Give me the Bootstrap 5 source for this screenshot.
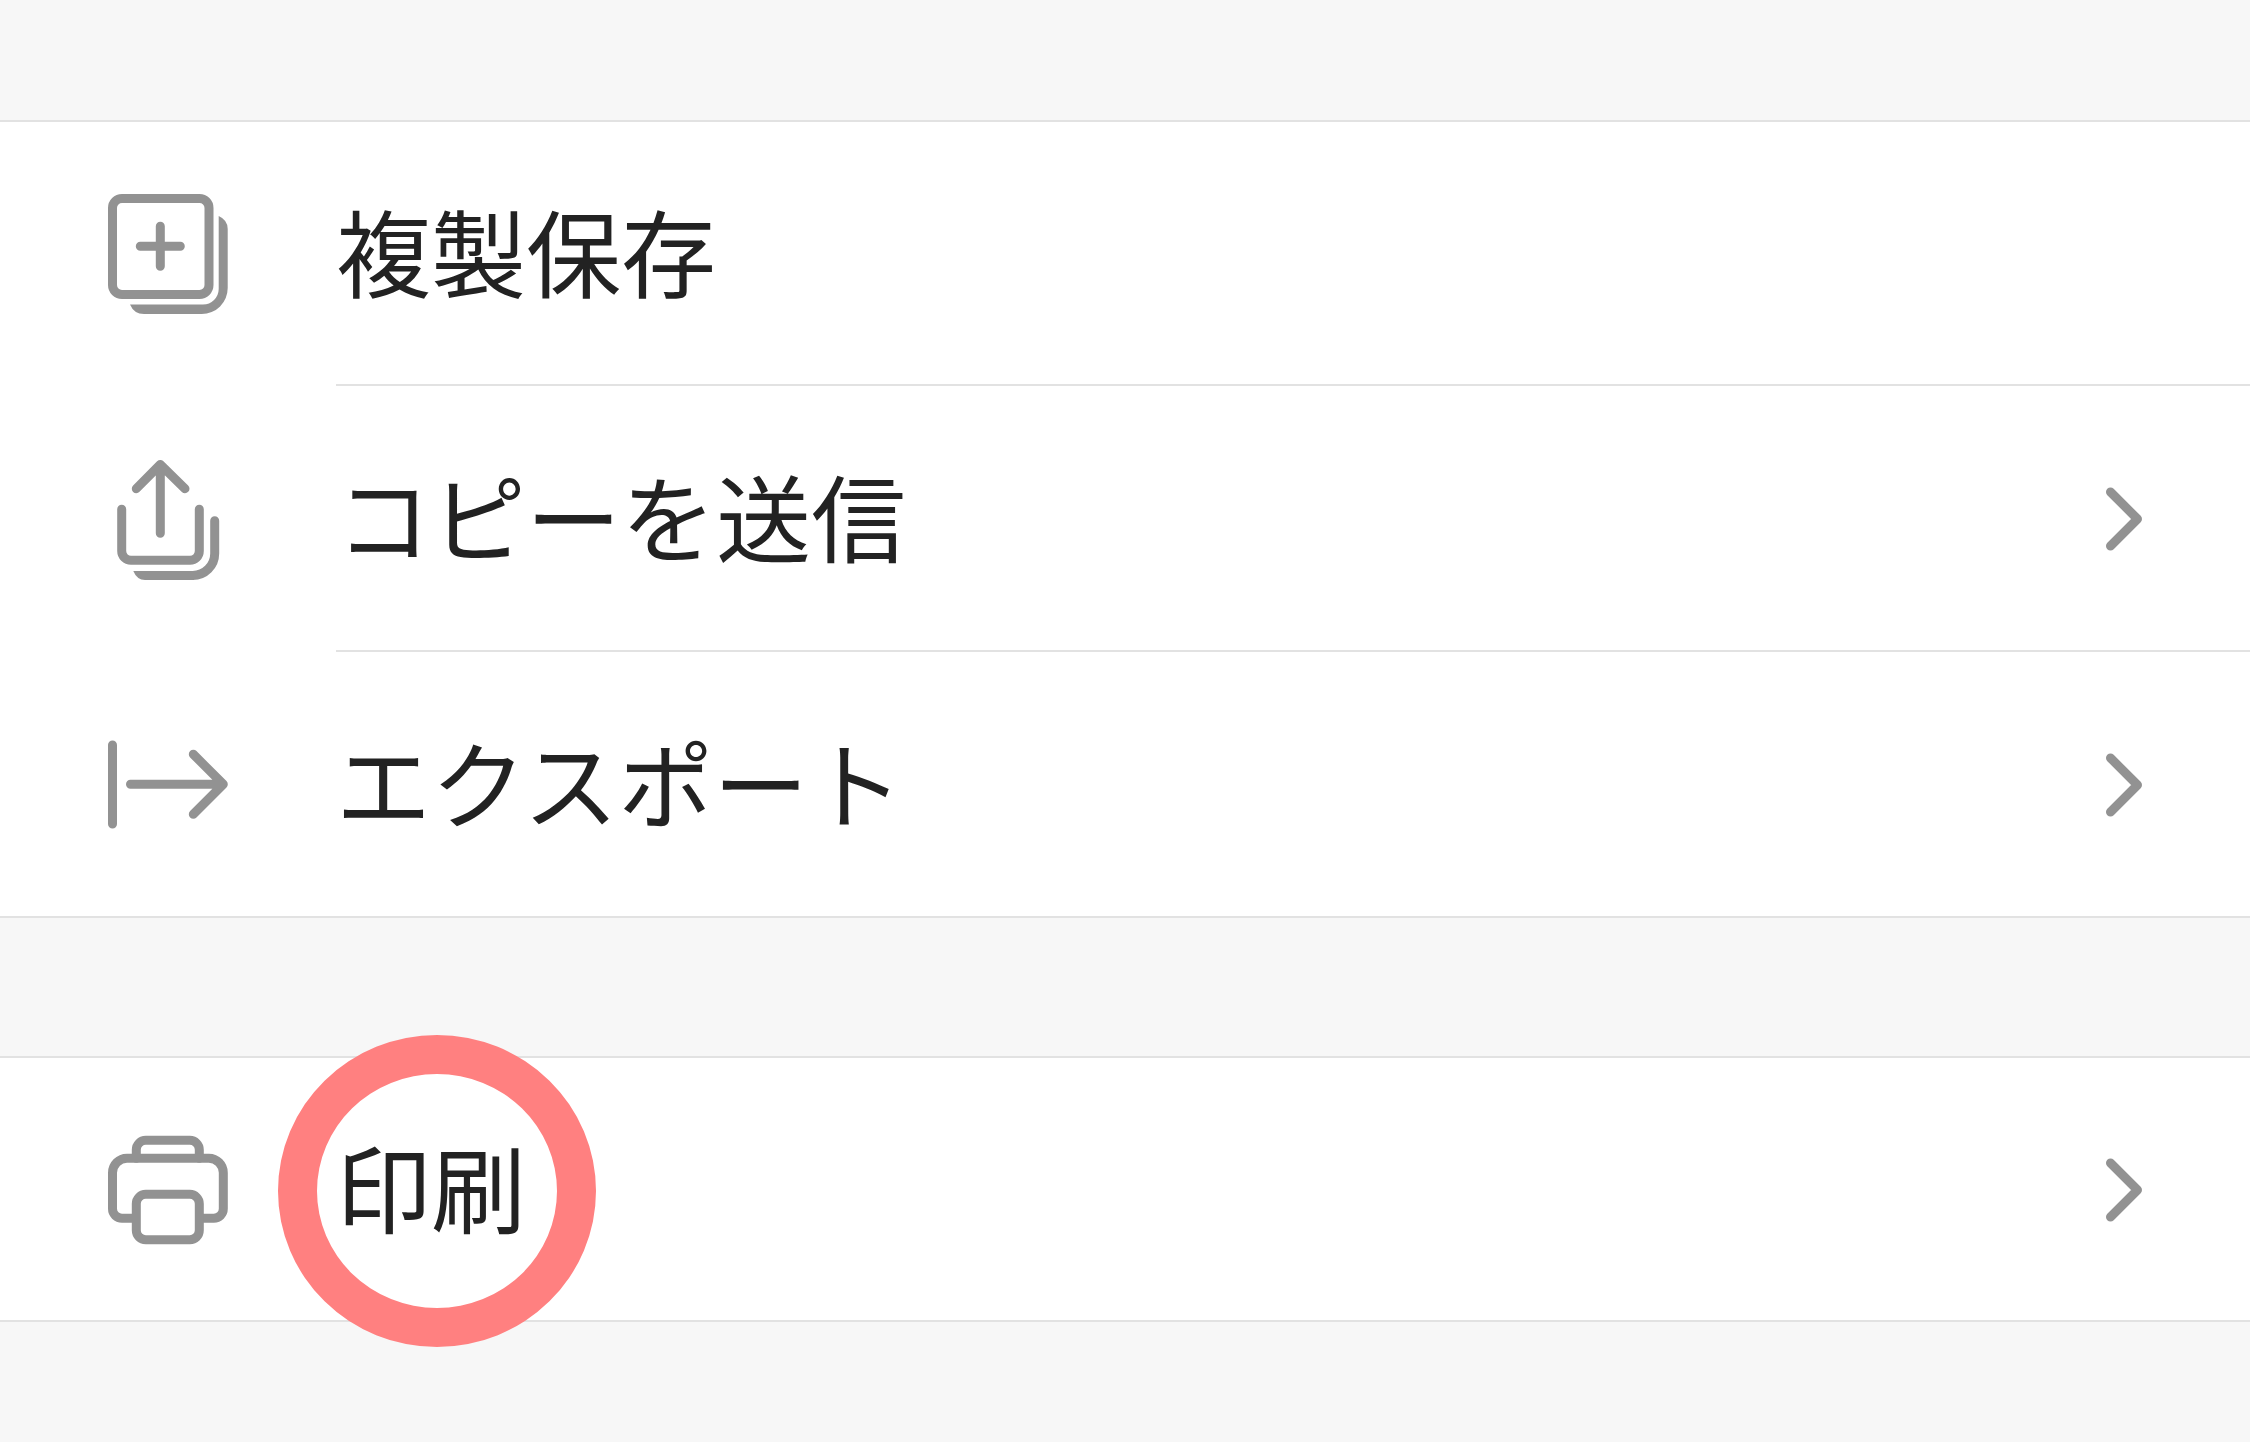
<!DOCTYPE html>
<html lang="ja">
<head>
<meta charset="utf-8">
<meta name="viewport" content="width=device-width, initial-scale=1">
<title>メニュー</title>
<link href="https://cdn.jsdelivr.net/npm/bootstrap@5.3.0/dist/css/bootstrap.min.css" rel="stylesheet">
<style>
  body { background: #f7f7f7; color: #222; font-family: "Noto Sans CJK JP", sans-serif; }
  .menu-page { padding-top: 120px; gap: 138px; overflow: hidden; }
  .menu-group { background: #fff; border-top: 2px solid #e2e2e2; border-bottom: 2px solid #e2e2e2; }
  .menu-item { padding-left: 108px; gap: 108px; color: inherit; font-size: 95px; line-height: 112px; }
  .menu-body { min-height: 262px; padding-right: 108px; }
  .menu-item + .menu-item .menu-body { min-height: 266px; border-top: 2px solid #e2e2e2; }
  .menu-label { padding-bottom: 6px; }
  .menu-glyph { width: 120px; height: 120px; }
  .menu-chevron { width: 36px; height: 64px; }
  .menu-glyph, .menu-chevron { flex: none; overflow: visible; fill: none; stroke: #929292; stroke-width: 9px; stroke-linecap: round; stroke-linejoin: round; }
  .solid-part { fill: #929292; stroke: none; }
  .tap-ring { left: -58px; top: 50%; width: 318px; height: 312px; margin-top: -154px; border: 39px solid #ff8080; border-radius: 50%; pointer-events: none; }
</style>
<script src="https://cdn.jsdelivr.net/npm/bootstrap@5.3.0/dist/js/bootstrap.bundle.min.js"></script>
</head>
<body>
<main class="menu-page d-flex flex-column min-vh-100">
  <nav class="menu-group d-flex flex-column" aria-label="ファイル">
    <a href="#duplicate" class="menu-item d-flex align-items-center text-decoration-none">
      <svg class="menu-glyph" viewBox="0 0 120 120" aria-hidden="true">
        <rect x="4.5" y="5.5" width="96.5" height="96" rx="9.5"/>
        <path d="M52.3 33.3v40M32.3 53.3h40"/>
        <path class="solid-part" d="M110.7 23Q119.7 27 119.7 36V95A26 26 0 0 1 93.7 121H36Q26 121 22 111.5H95A15.7 15.7 0 0 0 110.7 96Z"/>
      </svg>
      <span class="menu-body d-flex align-items-center flex-grow-1"><span class="menu-label">複製保存</span></span>
    </a>
    <a href="#send" class="menu-item d-flex align-items-center text-decoration-none">
      <svg class="menu-glyph" viewBox="0 -1 120 120" aria-hidden="true">
        <path d="M28.3 30.7L52.3 6.5L77 30.7M52.3 6.5V75.3"/>
        <path d="M13.7 51.3V93A9.3 9.3 0 0 0 23 102.3H82A9.3 9.3 0 0 0 91.3 93V51.3"/>
        <path d="M106.7 62.7V95.5A22 22 0 0 1 84.7 117.5"/>
        <path class="solid-part" d="M25.3 113H86V122H37Q29 122 25.3 113Z"/>
      </svg>
      <span class="menu-body d-flex align-items-center justify-content-between flex-grow-1">
        <span class="menu-label">コピーを送信</span>
        <svg class="menu-chevron" viewBox="0 0 36 64" aria-hidden="true"><path d="M4.5 6L31.5 33L4.5 60"/></svg>
      </span>
    </a>
    <a href="#export" class="menu-item d-flex align-items-center text-decoration-none">
      <svg class="menu-glyph" viewBox="0 -1 120 120" aria-hidden="true">
        <path d="M4.5 21V100M22.5 60.3H115M85.3 30.3L115.3 60.3L85.3 90.3"/>
      </svg>
      <span class="menu-body d-flex align-items-center justify-content-between flex-grow-1">
        <span class="menu-label">エクスポート</span>
        <svg class="menu-chevron" viewBox="0 0 36 64" aria-hidden="true"><path d="M4.5 6L31.5 33L4.5 60"/></svg>
      </span>
    </a>
  </nav>
  <nav class="menu-group d-flex flex-column" aria-label="印刷">
    <a href="#print" class="menu-item d-flex align-items-center text-decoration-none">
      <svg class="menu-glyph" viewBox="0 0 120 120" aria-hidden="true">
        <path d="M28.3 29.3V20.8A9.5 9.5 0 0 1 37.8 11.3H81.8A9.5 9.5 0 0 1 91.3 20.8V29.3"/>
        <path stroke-linecap="butt" d="M28.3 89.3H14A9.5 9.5 0 0 1 4.5 79.8V43.8A14.5 14.5 0 0 1 19 29.3H100.8A14.5 14.5 0 0 1 115.3 43.8V79.8A9.5 9.5 0 0 1 105.8 89.3H91.3"/>
        <rect x="28.3" y="65.3" width="63" height="45.5" rx="9.5"/>
      </svg>
      <span class="menu-body d-flex align-items-center justify-content-between flex-grow-1">
        <span class="menu-label position-relative">印刷<span class="tap-ring position-absolute"></span></span>
        <svg class="menu-chevron" viewBox="0 0 36 64" aria-hidden="true"><path d="M4.5 6L31.5 33L4.5 60"/></svg>
      </span>
    </a>
  </nav>
</main>
</body>
</html>
